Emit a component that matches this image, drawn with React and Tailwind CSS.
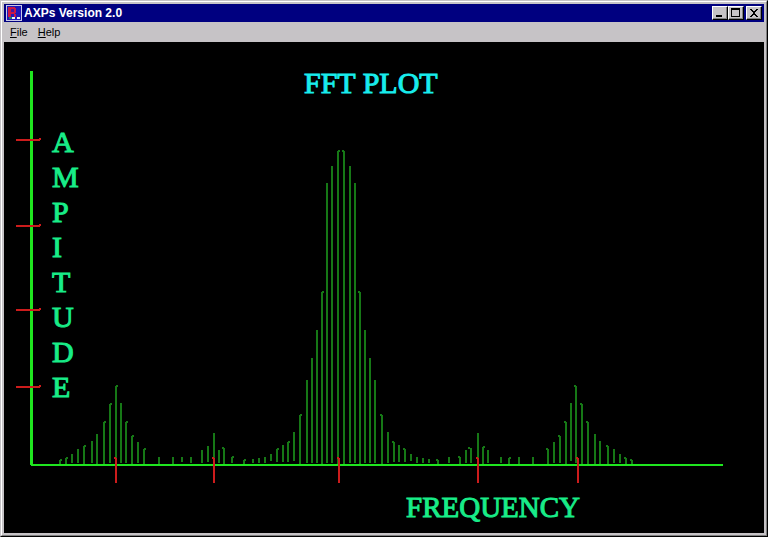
import React from "react";

// [centre x, top y, hook direction at the tip, bottom y]
const BARS = [
  [60, 459, 1, 463], [66, 457, 1, 463], [72, 454, 0, 463], [78, 449, 0, 463], [84, 445, 1, 463],
  [92, 441, 0, 463], [97, 434, 0, 464], [104, 421, 1, 463], [110, 403, 1, 462], [116, 385, 1, 462],
  [121, 403, 0, 463], [126, 421, 1, 462], [132, 435, 1, 463], [138, 442, 0, 463], [144, 448, 1, 464],
  [159, 457, 0, 464], [173, 457, 0, 464], [182, 457, 0, 462], [191, 457, 0, 463], [202, 450, 0, 463],
  [208, 446, 0, 462], [214, 433, 0, 463], [219, 450, 0, 463], [224, 447, -1, 463], [232, 456, 1, 462],
  [244, 459, 1, 463], [253, 459, 0, 463], [259, 458, 0, 463], [265, 457, 0, 463], [271, 454, 0, 461],
  [277, 448, 1, 461], [283, 445, 0, 462], [288, 441, 1, 461], [294, 432, 0, 461], [300, 414, 1, 463],
  [307, 380, 0, 463], [312, 358, 0, 463], [317, 330, 0, 463], [322, 291, 1, 463], [327, 183, 0, 463],
  [332, 166, 0, 463], [338, 150, 1, 463], [344, 150, -1, 463], [350, 166, 0, 463], [355, 183, 0, 463],
  [360, 291, -1, 463], [365, 330, 0, 463], [370, 358, 0, 463], [375, 380, 0, 463], [382, 414, -1, 463],
  [388, 432, 0, 463], [394, 441, -1, 461], [399, 445, 0, 462], [405, 448, -1, 461], [411, 454, 0, 461],
  [417, 457, 0, 463], [423, 458, 0, 463], [429, 459, 0, 463], [438, 459, -1, 463], [449, 457, 0, 463],
  [460, 456, -1, 463], [466, 450, 0, 463], [471, 447, -2, 462], [478, 433, 0, 463], [483, 446, 1, 463],
  [488, 450, 0, 463], [501, 457, 0, 463], [509, 457, 1, 463], [519, 457, 0, 464], [533, 457, 0, 464],
  [548, 448, -1, 464], [554, 442, 0, 463], [560, 435, -1, 462], [566, 421, -1, 463], [571, 403, 0, 461],
  [576, 385, -1, 462], [582, 403, -1, 463], [588, 421, -1, 463], [595, 434, 0, 464], [600, 441, 0, 464],
  [608, 445, -1, 463], [614, 449, 0, 463], [620, 454, 0, 463], [626, 457, -1, 463], [632, 459, -1, 463],
];
const AMPLITUDE_TICKS = [140, 226, 310, 387];
const FREQUENCY_TICKS = [116, 214, 339, 478, 578];
const LETTERS = ["A", "M", "P", "I", "T", "U", "D", "E"];

function AppIcon() {
  return (
    <svg viewBox="0 0 16 16" className="size-4 shrink-0" shapeRendering="crispEdges" aria-hidden="true">
      <rect width="16" height="16" fill="#c8c8e8" />
      <rect x="1" y="1" width="14" height="14" fill="#2018b8" />
      <path d="M2 2h7v1h1v5h-1v1h-4v3h-3z" fill="#c81848" />
      <path d="M5 4h3v3h-3z" fill="#4818a0" />
      <path d="M8 9h2v3h-2z" fill="#c81848" />
      <path d="M3 12h3v2h-3z" fill="#208070" />
      <path d="M6 12h3v2h-3zM11 12h3v2h-3z" fill="#f0f0f0" />
    </svg>
  );
}

function CaptionButton({ label, children }) {
  return (
    <button
      type="button"
      aria-label={label}
      className="h-[14px] w-4 border border-t-white border-l-white border-r-black border-b-black bg-[#c6c3c6] shadow-[inset_-1px_-1px_0_#808080]"
    >
      <svg viewBox="0 0 14 12" className="block h-3 w-[14px]" shapeRendering="crispEdges" aria-hidden="true">
        {children}
      </svg>
    </button>
  );
}

function Plot() {
  return (
    <svg
      viewBox="4 42 760 491"
      className="block h-auto w-full bg-black font-['Liberation_Serif',serif]"
      role="img"
      aria-label="FFT plot"
    >
      <g shapeRendering="crispEdges">
        <g fill="#167816">
          {BARS.map(([x, top, hook, bottom]) => (
            <React.Fragment key={x}>
              <rect x={x - 1 + hook} y={top} width="2" height="2" />
              <rect x={x - 1} y={top + (hook ? 1 : 0)} width="2" height={bottom - top} />
            </React.Fragment>
          ))}
        </g>
        <rect x="30" y="71" width="3" height="394" fill="#1fe61f" />
        <rect x="31" y="464" width="692" height="2" fill="#1fe61f" />
        <g fill="#cc1c1c">
          {AMPLITUDE_TICKS.map((y) => (
            <path key={y} d={`M16 ${y - 1}h23v-1h2v2h-1v1h-24z`} />
          ))}
          {FREQUENCY_TICKS.map((x) => (
            <path key={x} d={`M${x - 2} 457h2v1h1v25h-2v-24h-1z`} />
          ))}
        </g>
      </g>
      <text x="304" y="93" fontSize="30" fill="#18ecec" stroke="#18ecec" strokeWidth="1">
        FFT PLOT
      </text>
      <g fontSize="30" fill="#18ec88" stroke="#18ec88" strokeWidth="1">
        {LETTERS.map((letter, i) => (
          <text key={letter} x="52" y={152 + i * 35}>
            {letter}
          </text>
        ))}
        <text x="406" y="517" fontSize="29">
          FREQUENCY
        </text>
      </g>
    </svg>
  );
}

export default function App() {
  return (
    <div className="min-h-screen border border-t-[#c6c3c6] border-l-[#c6c3c6] border-r-black border-b-black bg-[#c6c3c6] font-['Liberation_Sans',Arial,sans-serif] text-black">
      <div className="border border-t-white border-l-white border-r-[#808080] border-b-[#808080] p-0.5">
        <header className="flex h-[18px] items-center gap-0.5 bg-[#000080] px-0.5">
          <AppIcon />
          <h1 className="grow text-xs font-bold text-white">AXPs Version 2.0</h1>
          <div className="flex">
            <CaptionButton label="Minimize">
              <rect x="3" y="8" width="6" height="2" />
            </CaptionButton>
            <CaptionButton label="Maximize">
              <path d="M2 1h9v9h-9zM3 3v6h7v-6z" fillRule="evenodd" />
            </CaptionButton>
            <div className="ml-0.5 flex">
              <CaptionButton label="Close">
                <path d="M3 2h2v1h1v1h2v-1h1v-1h2v1h-1v1h-1v1h-1v2h1v1h1v1h1v1h-2v-1h-1v-1h-2v1h-1v1h-2v-1h1v-1h1v-1h1v-2h-1v-1h-1v-1h-1z" />
              </CaptionButton>
            </div>
          </div>
        </header>
        <nav className="flex h-5 items-center gap-2.5 px-1.5 text-[11px]">
          <button type="button">
            <span className="underline">F</span>ile
          </button>
          <button type="button">
            <span className="underline">H</span>elp
          </button>
        </nav>
        <main>
          <Plot />
        </main>
      </div>
    </div>
  );
}
